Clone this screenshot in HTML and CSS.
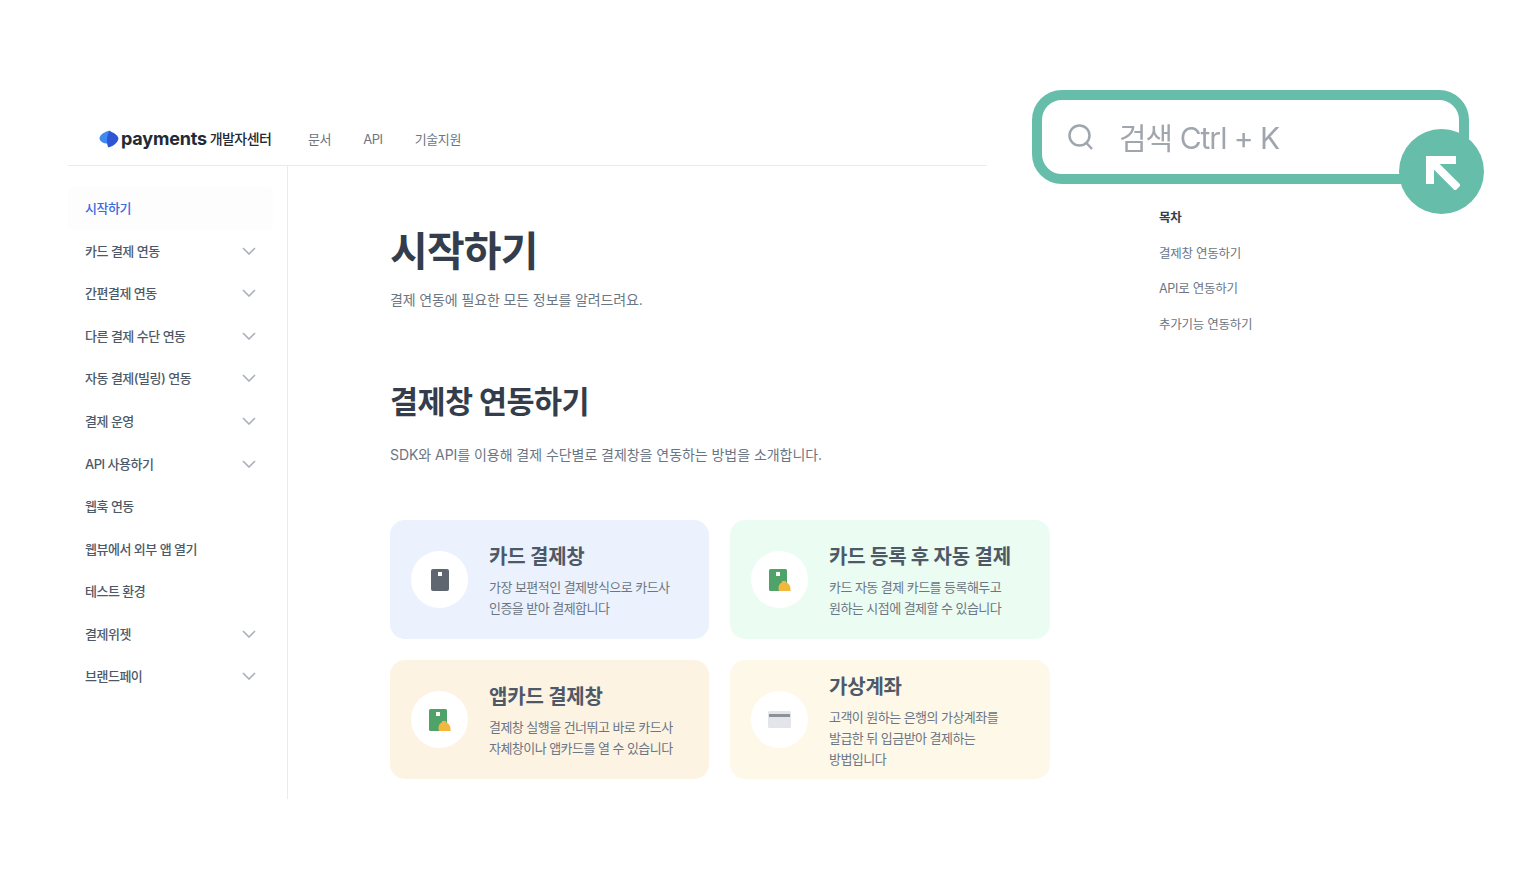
FILE: index.html
```html
<!DOCTYPE html>
<html lang="ko">
<head>
    <meta charset="UTF-8">
    <title>시작하기</title>
    <link rel="stylesheet" href="styles.css">
</head>
<body>
<div class="g-page">
    <div class="g-header">
        <a class="m-logo">
            <svg class="u-logo-icon" width="20" height="18" viewBox="0 0 20 18">
                <path d="M11 0.500C6 1.500 1 4.500 0.500 8C0.500 11.500 4 13.500 9 13.500C12 10 13 4 11 0.500Z" fill="#3f8af0"/>
                <path d="M10.500 1C15 2.500 19 5.500 19.500 8.500C19 12 15 16 9.500 17.500C7 14 7.500 5 10.500 1Z" fill="#2f55d4"/>
            </svg>
            <span class="u-logo-name">payments</span>
            <span class="u-logo-sub">개발자센터</span>
        </a>
        <ul class="m-gnb">
            <li>문서</li>
            <li>API</li>
            <li>기술지원</li>
        </ul>
    </div>
    <div class="g-body">
        <ul class="g-side">
            <li class="f-active">시작하기</li>
            <li>카드 결제 연동<svg class="u-arrow" viewBox="0 0 14 8"><path d="M1 1l6 6 6-6"/></svg></li>
            <li>간편결제 연동<svg class="u-arrow" viewBox="0 0 14 8"><path d="M1 1l6 6 6-6"/></svg></li>
            <li>다른 결제 수단 연동<svg class="u-arrow" viewBox="0 0 14 8"><path d="M1 1l6 6 6-6"/></svg></li>
            <li>자동 결제(빌링) 연동<svg class="u-arrow" viewBox="0 0 14 8"><path d="M1 1l6 6 6-6"/></svg></li>
            <li>결제 운영<svg class="u-arrow" viewBox="0 0 14 8"><path d="M1 1l6 6 6-6"/></svg></li>
            <li>API 사용하기<svg class="u-arrow" viewBox="0 0 14 8"><path d="M1 1l6 6 6-6"/></svg></li>
            <li>웹훅 연동</li>
            <li>웹뷰에서 외부 앱 열기</li>
            <li>테스트 환경</li>
            <li>결제위젯<svg class="u-arrow" viewBox="0 0 14 8"><path d="M1 1l6 6 6-6"/></svg></li>
            <li>브랜드페이<svg class="u-arrow" viewBox="0 0 14 8"><path d="M1 1l6 6 6-6"/></svg></li>
        </ul>
        <div class="g-main">
            <h1>시작하기</h1>
            <p class="u-lead">결제 연동에 필요한 모든 정보를 알려드려요.</p>
            <h2>결제창 연동하기</h2>
            <p class="u-desc">SDK와 API를 이용해 결제 수단별로 결제창을 연동하는 방법을 소개합니다.</p>
            <div class="m-cards">
                <div class="m-card f-blue">
                    <span class="u-circle">
                        <svg width="18" height="22" viewBox="0 0 18 22"><rect width="18" height="22" rx="2" fill="#5f6670"/><rect x="7" y="3" width="4" height="4" fill="#fff"/></svg>
                    </span>
                    <div class="u-text">
                        <h3>카드 결제창</h3>
                        <p>가장 보편적인 결제방식으로 카드사<br>인증을 받아 결제합니다</p>
                    </div>
                </div>
                <div class="m-card f-green">
                    <span class="u-circle">
                        <svg width="22" height="22" viewBox="0 0 22 22"><rect width="18" height="22" rx="1.500" fill="#4fa268"/><rect x="7" y="3" width="4" height="4" fill="#fff"/><path d="M10 22c-1.500-5 1-8 3-8.500V12h4v1.500c3 .5 5 4 4.500 8.500z" fill="#f3b73f"/></svg>
                    </span>
                    <div class="u-text">
                        <h3>카드 등록 후 자동 결제</h3>
                        <p>카드 자동 결제 카드를 등록해두고<br>원하는 시점에 결제할 수 있습니다</p>
                    </div>
                </div>
                <div class="m-card f-orange">
                    <span class="u-circle">
                        <svg width="22" height="22" viewBox="0 0 22 22"><rect width="18" height="22" rx="1.500" fill="#4fa268"/><rect x="7" y="3" width="4" height="4" fill="#fff"/><path d="M10 22c-1.500-5 1-8 3-8.500V12h4v1.500c3 .5 5 4 4.500 8.500z" fill="#f3b73f"/></svg>
                    </span>
                    <div class="u-text">
                        <h3>앱카드 결제창</h3>
                        <p>결제창 실행을 건너뛰고 바로 카드사<br>자체창이나 앱카드를 열 수 있습니다</p>
                    </div>
                </div>
                <div class="m-card f-yellow">
                    <span class="u-circle">
                        <svg width="23" height="17" viewBox="0 0 23 17"><rect width="23" height="17" rx="1.500" fill="#e3e5ea"/><rect x="1" y="3" width="21" height="3" fill="#8b9099"/></svg>
                    </span>
                    <div class="u-text">
                        <h3>가상계좌</h3>
                        <p>고객이 원하는 은행의 가상계좌를<br>발급한 뒤 입금받아 결제하는<br>방법입니다</p>
                    </div>
                </div>
            </div>
        </div>
        <ul class="g-toc">
            <li class="u-toc-title">목차</li>
            <li>결제창 연동하기</li>
            <li>API로 연동하기</li>
            <li>추가기능 연동하기</li>
        </ul>
    </div>
</div>
<!-- 검색 강조 -->
<div class="m-search">
    <svg class="u-search-icon" width="26" height="26" viewBox="0 0 26 26"><circle cx="11.500" cy="11.500" r="10" /><path d="M18.500 19l5.500 6"/></svg>
    <span class="u-search-text">검색 Ctrl + K</span>
</div>
<div class="m-pointer">
    <svg width="36" height="36" viewBox="0 0 36 36"><path d="M6 30V6H32"/><path d="M6 6l28 28"/></svg>
</div>
</body>
</html>
```

FILE: styles.css
```css
* {
    padding: 0;
    margin: 0;
    box-sizing: border-box;
}

body {
    background-color: #fff;
    color: #4e5968;
    font-family: "Inter", "Noto Sans CJK KR", sans-serif;
    overflow: hidden;
}

ul {
    list-style: none;
}

.g-page {
    width: 1536px;
    height: 877px;
    padding: 113px 0 0 68px;
}

.g-header {
    display: flex;
    align-items: center;
    width: 919px;
    height: 53px;
    padding-left: 31px;
    border-bottom: 1px solid #e9ebee;
}

.m-logo {
    display: flex;
    align-items: center;
    width: 209px;
    color: #222a35;
}

.u-logo-icon {
    margin-right: 2px;
}

.u-logo-name {
    font-size: 18px;
    line-height: 22px;
    font-weight: 700;
    letter-spacing: -0.2px;
}

.u-logo-sub {
    margin-left: 3px;
    font-size: 14px;
    line-height: 22px;
    font-weight: 500;
    letter-spacing: -0.6px;
}

.m-gnb {
    display: flex;
    gap: 32px;
    font-size: 13px;
    line-height: 20px;
    letter-spacing: -0.4px;
    color: #6b7684;
}

.g-body {
    display: flex;
    align-items: flex-start;
}

.g-side {
    width: 220px;
    height: 633px;
    padding-top: 21px;
    border-right: 1px solid #e9ebee;
    font-size: 13px;
    line-height: 20px;
    font-weight: 500;
    letter-spacing: -0.5px;
    color: #4e5968;
}

.g-side li {
    display: flex;
    align-items: center;
    justify-content: space-between;
    width: 205px;
    height: 42.550px;
    padding: 0 17px 0 17px;
}

.g-side .f-active {
    color: #3a6be0;
    background-color: #fdfdfe;
    border-radius: 6px;
}

.u-arrow {
    width: 14px;
    height: 8px;
    fill: none;
    stroke: #a9b0ba;
    stroke-width: 1.600;
}

.g-main {
    flex: none;
    width: 660px;
    margin-left: 102px;
    padding-top: 59px;
}

h1 {
    height: 52px;
    font-size: 41px;
    line-height: 52px;
    font-weight: 700;
    letter-spacing: -0.8px;
    color: #333d4b;
}

.u-lead {
    margin-top: 12px;
    font-size: 14px;
    line-height: 22px;
    letter-spacing: -0.12px;
    color: #6b7684;
}

h2 {
    margin-top: 70px;
    font-size: 30.500px;
    line-height: 42px;
    font-weight: 700;
    letter-spacing: -0.6px;
    color: #333d4b;
}

.u-desc {
    margin-top: 21px;
    font-size: 14px;
    line-height: 22px;
    letter-spacing: -0.05px;
    color: #6b7684;
}

.m-cards {
    display: grid;
    grid-template-columns: 319px 320px;
    grid-auto-rows: 119px;
    gap: 21px;
    margin-top: 54px;
}

.m-card {
    display: flex;
    align-items: center;
    padding-left: 21px;
    border-radius: 15px;
}

.f-blue {
    background-color: #ebf2fd;
}

.f-green {
    background-color: #ebfcf3;
}

.f-orange {
    background-color: #fcf3e3;
}

.f-yellow {
    background-color: #fdf8e8;
}

.u-circle {
    display: flex;
    flex: none;
    align-items: center;
    justify-content: center;
    width: 57px;
    height: 57px;
    margin-right: 21px;
    border-radius: 50%;
    background-color: #fff;
}

.u-text {
    padding-top: 2px;
}

.u-text h3 {
    font-size: 20px;
    line-height: 30px;
    font-weight: 700;
    letter-spacing: -0.2px;
    color: #4e5968;
}

.u-text p {
    margin-top: 5px;
    font-size: 13px;
    line-height: 21px;
    letter-spacing: -0.55px;
    color: #6b7684;
}

.g-toc {
    flex: none;
    margin: 34px 0 0 109px;
    font-size: 12.500px;
    letter-spacing: -0.25px;
    color: #6b7684;
}

.g-toc li {
    height: 35.500px;
    line-height: 35.500px;
}

.g-toc .u-toc-title {
    font-weight: 700;
    color: #333d4b;
}

.m-search {
    position: absolute;
    left: 1032px;
    top: 90px;
    display: flex;
    align-items: center;
    width: 437px;
    height: 94px;
    padding-left: 26px;
    border: 10px solid #66bdaa;
    border-radius: 30px;
    background-color: #fff;
    font-size: 30px;
    line-height: 40px;
    letter-spacing: -1px;
    color: #a0a6ae;
}

.u-search-icon {
    margin-right: 25px;
    fill: none;
    stroke: #a0a6ae;
    stroke-width: 2.500;
    filter: blur(0.4px);
}

.u-search-text {
    padding-top: 2px;
    filter: blur(0.5px);
}

.m-pointer {
    position: absolute;
    left: 1399px;
    top: 129px;
    display: flex;
    align-items: center;
    justify-content: center;
    width: 85px;
    height: 85px;
    border-radius: 50%;
    background-color: #66bdaa;
}

.m-pointer svg {
    fill: none;
    stroke: #fff;
    stroke-width: 8;
}
```
